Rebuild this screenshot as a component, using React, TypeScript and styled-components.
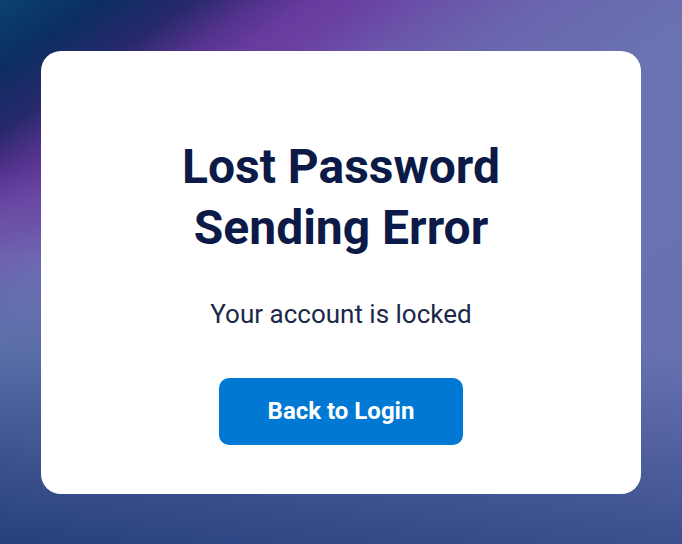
import React from "react";
import styled, { createGlobalStyle } from "styled-components";

const GlobalStyle = createGlobalStyle`
  html, body {
    margin: 0;
    padding: 0;
    height: 100%;
  }
  body {
    font-family: Roboto, "Noto Sans", "Liberation Sans", sans-serif;
  }
  #root {
    height: 100%;
  }
`;

const Page = styled.main`
  box-sizing: border-box;
  width: 100%;
  height: 100vh;
  display: flex;
  align-items: center;
  justify-content: center;
  background:
    linear-gradient(188deg, rgba(22, 52, 112, 0) 55%, rgba(22, 52, 112, 0.8) 100%),
    radial-gradient(ellipse 240px 180px at 0px 345px, rgba(116, 142, 192, 0.75), rgba(116, 142, 192, 0) 100%),
    linear-gradient(
      146deg,
      #0a426f 0%,
      #0c2e62 7%,
      #27296b 13%,
      #52328c 17.5%,
      #663b9d 21%,
      #6a42a2 25%,
      #6a55aa 30%,
      #6a66ae 37%,
      #6a74b2 50%,
      #6670b0 100%
    );
`;

const Card = styled.section`
  box-sizing: border-box;
  width: 600px;
  height: 443px;
  background: #ffffff;
  border-radius: 20px;
  padding: 85px 40px 49px;
  display: flex;
  flex-direction: column;
  align-items: center;
`;

const Title = styled.h1`
  margin: 0;
  font-size: 48px;
  line-height: 61px;
  font-weight: 700;
  color: #0b1a47;
  text-align: center;
`;

const Message = styled.p`
  margin: 38px 0 0;
  font-size: 26px;
  line-height: 36px;
  font-weight: 400;
  color: #1c2848;
  text-align: center;
`;

const Button = styled.button`
  margin-top: 46px;
  width: 244px;
  height: 67px;
  border: none;
  border-radius: 10px;
  background: #0078d4;
  color: #ffffff;
  font-family: inherit;
  font-size: 24px;
  font-weight: 700;
  display: flex;
  align-items: center;
  justify-content: center;
  cursor: pointer;
`;

export default function App() {
  return (
    <>
      <GlobalStyle />
      <Page>
        <Card>
          <Title>
            Lost Password
            <br />
            Sending Error
          </Title>
          <Message>Your account is locked</Message>
          <Button type="button">Back to Login</Button>
        </Card>
      </Page>
    </>
  );
}
